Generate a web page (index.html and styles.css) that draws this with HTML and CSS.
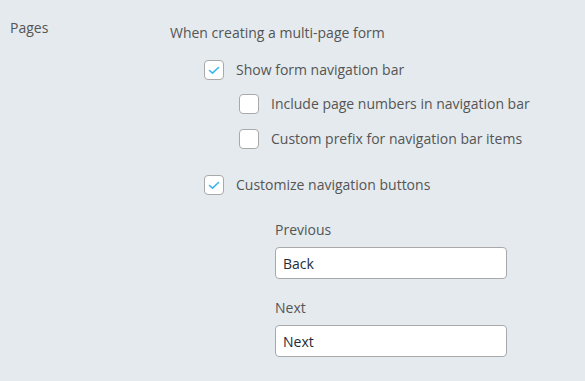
FILE: index.html
```html
<!DOCTYPE html>
<html lang="en">
<head>
    <meta charset="UTF-8">
    <title>Form settings - Pages</title>
    <meta name="viewport" content="width=device-width">
    <link rel="stylesheet" href="styles.css">
</head>
<body>
  <div class="setting-row">
    <div class="setting-name">Pages</div>
    <div class="setting-body">
      <p class="intro">When creating a multi-page form</p>

      <label class="check lvl1">
        <span class="box">
          <svg width="12" height="9" viewBox="0 0 12 9"><path d="M1.5 4.5 L4.5 7.2 L10.5 1.5" fill="none" stroke="#3db6ef" stroke-width="1.6" stroke-linecap="round" stroke-linejoin="round"/></svg>
        </span>
        Show form navigation bar
      </label>

      <div class="sub-options">
        <label class="check">
          <span class="box"></span>
          Include page numbers in navigation bar
        </label>
        <label class="check">
          <span class="box"></span>
          Custom prefix for navigation bar items
        </label>
      </div>

      <label class="check lvl1 gap-top">
        <span class="box">
          <svg width="12" height="9" viewBox="0 0 12 9"><path d="M1.5 4.5 L4.5 7.2 L10.5 1.5" fill="none" stroke="#3db6ef" stroke-width="1.6" stroke-linecap="round" stroke-linejoin="round"/></svg>
        </span>
        Customize navigation buttons
      </label>

      <div class="nav-fields">
        <label for="prev" class="field-label">Previous</label>
        <input type="text" id="prev" class="text-input" value="Back">
        <label for="next" class="field-label next-label">Next</label>
        <input type="text" id="next" class="text-input" value="Next">
      </div>
    </div>
  </div>
</body>
</html>
```

FILE: styles.css
```css
body {
  margin: 0;
  background-color: #e4eaee;
  font-family: "Open Sans", "Noto Sans", Arial, sans-serif;
  font-size: 14px;
  color: #555;
}

.setting-row {
  display: flex;
  padding-top: 18px;
}

.setting-name {
  width: 160px;
  padding-left: 10px;
  line-height: 20px;
}

.setting-body {
  padding-top: 5px;
  display: flex;
  flex-direction: column;
  align-items: flex-start;
}

.intro {
  margin: 0;
  line-height: 20px;
}

.check {
  display: flex;
  align-items: center;
  gap: 12px;
  line-height: 20px;
  cursor: pointer;
}

.lvl1 {
  margin-left: 34px;
  margin-top: 17px;
}

.gap-top {
  margin-top: 26px;
}

.box {
  width: 18px;
  height: 18px;
  border: 1px solid #a9a9a9;
  border-radius: 4px;
  background: #fff;
  display: flex;
  align-items: center;
  justify-content: center;
}

.sub-options {
  margin-left: 69px;
  display: flex;
  flex-direction: column;
  gap: 15px;
  margin-top: 14px;
}

.nav-fields {
  margin-left: 105px;
  margin-top: 25px;
  display: flex;
  flex-direction: column;
}

.field-label {
  line-height: 20px;
}

.next-label {
  margin-top: 19px;
}

.text-input {
  width: 232px;
  height: 32px;
  box-sizing: border-box;
  margin-top: 7px;
  padding: 0 7px;
  border: 1px solid #a9a9a9;
  border-radius: 4px;
  background: #fff;
  font-family: inherit;
  font-size: 14px;
  color: #1c2b3a;
  outline: none;
}
```
